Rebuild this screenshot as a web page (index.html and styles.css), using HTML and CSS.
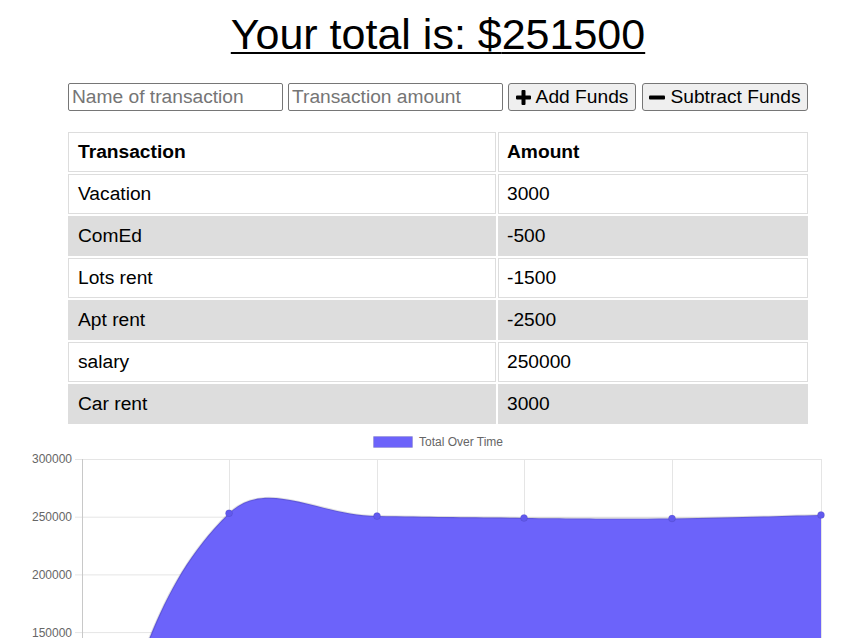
FILE: index.html
```html
<!DOCTYPE html>
<html lang="en">
<head>
<meta charset="utf-8">
<title>Budget Tracker</title>
<link rel="stylesheet" href="styles.css">
</head>
<body>
<div class="wrap">
  <h1 class="total">Your total is: $<span>251500</span></h1>
  <div class="form">
    <input class="field" type="text" placeholder="Name of transaction">
    <input class="field" type="number" placeholder="Transaction amount">
    <button class="btn btn-add" type="button">
      <svg class="ico-plus" width="15" height="15" viewBox="0 0 15 15"><path d="M5.5 1a1 1 0 0 1 1-1h2a1 1 0 0 1 1 1v4.5h4.5a1 1 0 0 1 1 1v2a1 1 0 0 1-1 1h-4.5v4.5a1 1 0 0 1-1 1h-2a1 1 0 0 1-1-1v-4.5h-4.5a1 1 0 0 1-1-1v-2a1 1 0 0 1 1-1h4.5z" fill="#000"/></svg>
      <span>Add Funds</span>
    </button>
    <button class="btn btn-sub" type="button">
      <svg class="ico-minus" width="16" height="15" viewBox="0 0 16 15"><rect x="0" y="5.5" width="16" height="4" rx="1" fill="#000"/></svg>
      <span>Subtract Funds</span>
    </button>
  </div>
  <table class="tx">
    <thead>
      <tr><th>Transaction</th><th>Amount</th></tr>
    </thead>
    <tbody>
      <tr><td>Vacation</td><td>3000</td></tr>
      <tr><td>ComEd</td><td>-500</td></tr>
      <tr><td>Lots rent</td><td>-1500</td></tr>
      <tr><td>Apt rent</td><td>-2500</td></tr>
      <tr><td>salary</td><td>250000</td></tr>
      <tr><td>Car rent</td><td>3000</td></tr>
    </tbody>
  </table>
</div>
<svg class="chart" width="861" height="210" viewBox="0 428 861 210">
  <g class="legend">
    <rect x="373.5" y="436.5" width="39" height="11" fill="#6c63fa" stroke="rgba(0,0,0,0.1)" stroke-width="1"/>
    <text x="419" y="446" class="lbl">Total Over Time</text>
  </g>
  <g stroke="#e5e5e5" stroke-width="1">
    <line x1="75" y1="459.5" x2="821.5" y2="459.5"/>
    <line x1="75" y1="517.2" x2="821.5" y2="517.2"/>
    <line x1="75" y1="574.9" x2="821.5" y2="574.9"/>
    <line x1="75" y1="632.6" x2="821.5" y2="632.6"/>
    <line x1="229.5" y1="459" x2="229.5" y2="640"/>
    <line x1="377.5" y1="459" x2="377.5" y2="640"/>
    <line x1="524.5" y1="459" x2="524.5" y2="640"/>
    <line x1="672.5" y1="459" x2="672.5" y2="640"/>
    <line x1="821.5" y1="459" x2="821.5" y2="640"/>
  </g>
  <line x1="82.5" y1="459" x2="82.5" y2="640" stroke="#c8c8c8" stroke-width="1"/>
  <g class="ylab" text-anchor="end">
    <text x="72" y="463">300000</text>
    <text x="72" y="521">250000</text>
    <text x="72" y="578.5">200000</text>
    <text x="72" y="636.5">150000</text>
  </g>
  <path d="M82,801.7 C140.8,686.4 148.0,591.5 229,513.2 C266.1,477.4 317.8,515.2 377,516.1 C435.8,517.0 465.2,517.4 524,517.9 C583.2,518.4 612.8,519.0 672,518.4 C731.6,517.8 761.4,516.4 821,515.0 L821,805 L82,805 Z" fill="#6c63fa"/>
  <path d="M82,801.7 C140.8,686.4 148.0,591.5 229,513.2 C266.1,477.4 317.8,515.2 377,516.1 C435.8,517.0 465.2,517.4 524,517.9 C583.2,518.4 612.8,519.0 672,518.4 C731.6,517.8 761.4,516.4 821,515.0" fill="none" stroke="rgba(0,0,0,0.12)" stroke-width="2"/>
  <g fill="#6159ee" stroke="rgba(0,0,0,0.08)" stroke-width="1">
    <circle cx="229" cy="513.2" r="3.5"/>
    <circle cx="377" cy="516.1" r="3.5"/>
    <circle cx="524" cy="517.9" r="3.5"/>
    <circle cx="672" cy="518.4" r="3.5"/>
    <circle cx="821" cy="515.0" r="3.5"/>
  </g>
</svg>
</body>
</html>
```

FILE: styles.css
```css
html, body {
  margin: 0;
  padding: 0;
  background: #fff;
}

body {
  font-family: "Liberation Sans", Arial, Helvetica, sans-serif;
  color: #000;
  width: 861px;
  overflow: hidden;
}

.wrap {
  margin-left: 68px;
  width: 740px;
}

.total {
  margin: 10px 0 0;
  font-size: 43px;
  line-height: 49px;
  font-weight: normal;
  text-align: center;
  text-decoration: underline;
  text-decoration-thickness: 2px;
  text-underline-offset: 3px;
}

.form {
  display: flex;
  gap: 5px;
  margin-top: 24px;
  height: 28px;
}

.field {
  box-sizing: border-box;
  width: 215px;
  height: 28px;
  margin: 0;
  padding: 0 3px;
  border: 1px solid #767676;
  border-radius: 2px;
  font-family: "Liberation Sans", Arial, sans-serif;
  font-size: 19.2px;
  color: #000;
  background: #fff;
  -moz-appearance: textfield;
}

.field::-webkit-outer-spin-button,
.field::-webkit-inner-spin-button {
  -webkit-appearance: none;
  margin: 0;
}

.field::placeholder {
  color: #757575;
}

.btn {
  box-sizing: border-box;
  display: flex;
  align-items: center;
  justify-content: center;
  gap: 5px;
  height: 28px;
  margin: 0;
  padding: 0;
  border: 1px solid #767676;
  border-radius: 3px;
  background: #efefef;
  font-family: "Liberation Sans", Arial, sans-serif;
  font-size: 19.2px;
  color: #000;
}

.btn-add {
  width: 128px;
}

.btn-sub {
  width: 166px;
  margin-left: 1px;
}

.btn svg {
  display: block;
  flex: none;
}

.tx {
  margin: 19px 0 0 -2px;
  width: 744px;
  border-collapse: separate;
  border-spacing: 2px;
  font-size: 19.2px;
  table-layout: fixed;
}

.tx th:first-child,
.tx td:first-child {
  width: 428px;
}

.tx th,
.tx td {
  box-sizing: border-box;
  height: 40px;
  padding: 0 8px 0 9px;
  border: 1px solid #dddddd;
  text-align: left;
  vertical-align: middle;
  line-height: 22px;
}

.tx th + th,
.tx td + td {
  padding-left: 8px;
}

.tx th {
  font-weight: bold;
}

.tx tbody tr:nth-child(even) td {
  background: #dddddd;
}

.chart {
  display: block;
  margin-top: 2px;
}

.chart text {
  font-family: "Liberation Sans", Arial, sans-serif;
  font-size: 12px;
  fill: #666;
}
```
